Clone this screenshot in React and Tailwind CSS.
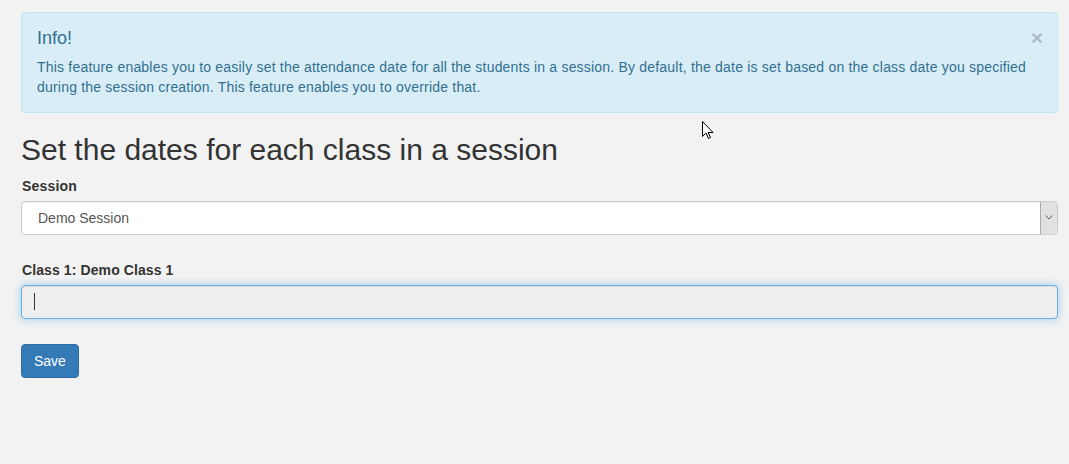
export default function App() {
  return (
    <div
      className="relative min-h-[464px] w-full bg-[#f2f2f2] pl-[21px] pr-[11px] pt-[12px] text-[14px] leading-[20px] text-[#333]"
      style={{ fontFamily: '"Liberation Sans", Arial, Helvetica, sans-serif' }}
    >
      <div className="relative mb-[20px] rounded-[4px] border border-[#bce8f1] bg-[#d9edf7] px-[15px] pb-[15px] pt-[16px] text-[#31708f]">
        <span className="absolute right-[14px] top-[14px] text-[21px] font-bold leading-none text-black opacity-20">
          ×
        </span>
        <h4 className="mb-[8px] text-[18px] leading-[19.8px]">Info!</h4>
        <p className="tracking-[0.2px]">
          This feature enables you to easily set the attendance date for all the students in a session. By default, the
          date is set based on the class date you specified during the session creation. This feature enables you to
          override that.
        </p>
      </div>

      <h3 className="mb-[10px] text-[30px] leading-[33px] text-[#333]">Set the dates for each class in a session</h3>

      <div className="mb-[25px]">
        <label className="mb-[5px] block pl-[1px] text-[14px] font-bold leading-[20px] tracking-[0.2px]">Session</label>
        <div className="flex h-[34px] items-stretch rounded-[4px] border border-[#ccc] bg-white shadow-[inset_0_1px_1px_rgba(0,0,0,0.075)]">
          <div className="flex flex-1 items-center pl-[16px] text-[14px] text-[#555]">Demo Session</div>
          <div className="flex w-[17px] items-center justify-center rounded-r-[3px] border-l border-[#acacac] bg-[#e1e1e1]">
            <svg width="8" height="5" viewBox="0 0 8 5">
              <path d="M0.5 0.5 L4 4 L7.5 0.5" fill="none" stroke="#555" strokeWidth="1" />
            </svg>
          </div>
        </div>
      </div>

      <div className="mb-[25px]">
        <label className="mb-[5px] block pl-[1px] text-[14px] font-bold leading-[20px] tracking-[0.1px]">
          Class 1: Demo Class 1
        </label>
        <div className="flex h-[34px] items-center rounded-[4px] border border-[#66afe9] bg-[#eeeeee] pl-[12px] shadow-[inset_0_1px_1px_rgba(0,0,0,0.075),0_0_8px_rgba(102,175,233,0.6)]">
          <div className="h-[17px] w-[1px] bg-[#333]" />
        </div>
      </div>

      <button className="h-[34px] rounded-[4px] border border-[#2e6da4] bg-[#337ab7] px-[12px] text-[14px] leading-[20px] text-white">
        Save
      </button>

      <svg className="absolute left-[702px] top-[121px]" width="12" height="19" viewBox="0 0 12 19">
        <path
          d="M0.5 0.5 L0.5 15.5 L4 12 L6.5 17.5 L8.5 16.5 L6 11.5 L11 11.5 Z"
          fill="#fff"
          stroke="#000"
          strokeWidth="1"
          strokeLinejoin="miter"
        />
      </svg>
    </div>
  );
}
